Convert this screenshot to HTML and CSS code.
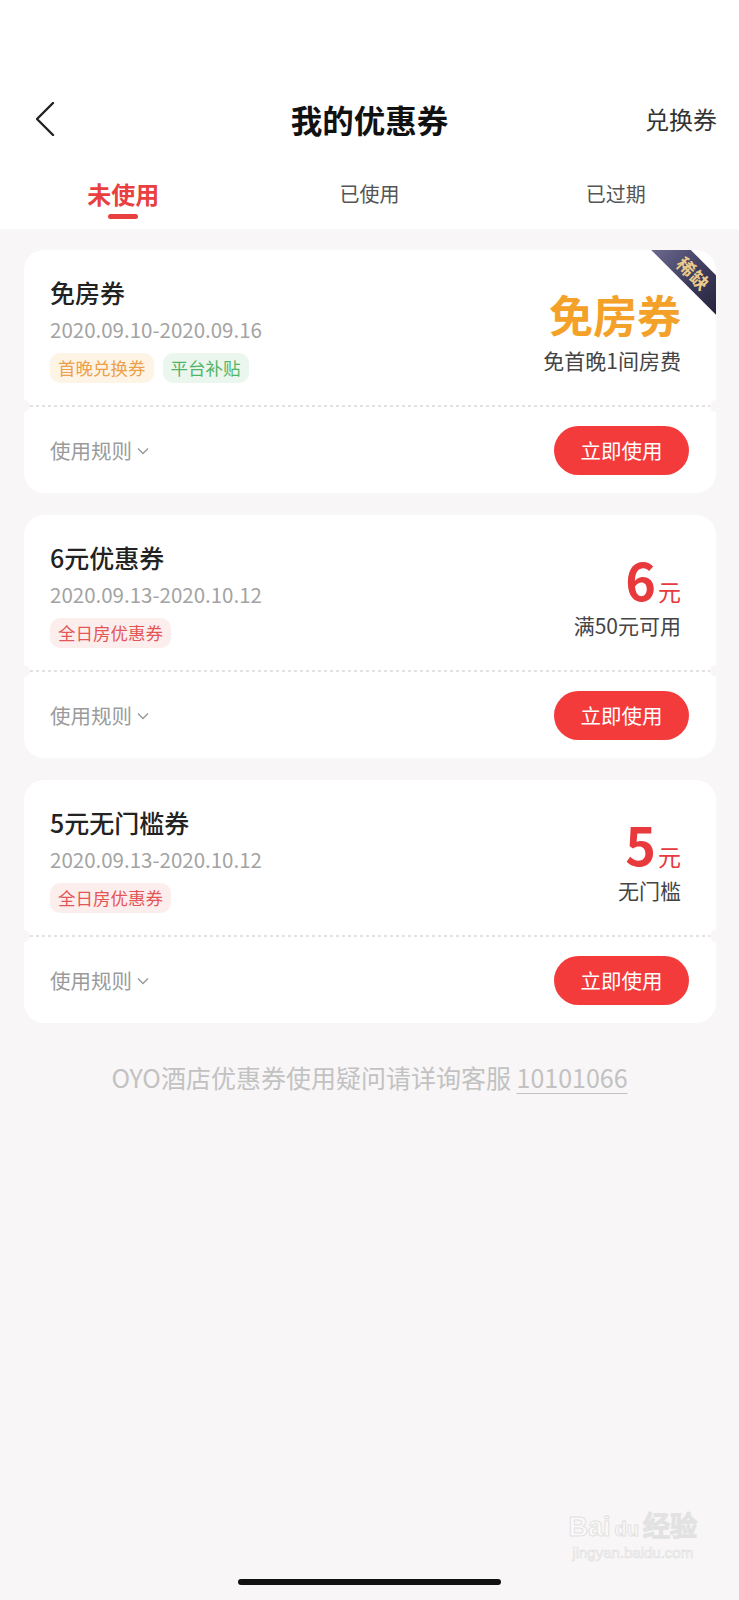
FILE: index.html
```html
<!DOCTYPE html>
<html lang="zh-CN">
<head>
<meta charset="utf-8">
<title>我的优惠券</title>
<link rel="stylesheet" href="styles.css">
</head>
<body>
<div class="screen">
  <header class="top">
    <div class="statusbar"></div>
    <div class="navbar">
      <svg class="back" width="20" height="34" viewBox="0 0 20 34" aria-hidden="true">
        <polyline points="17,1 1,17 17,33" fill="none" stroke="#222" stroke-width="2.4" stroke-linecap="round" stroke-linejoin="round"/>
      </svg>
      <h1 class="title">我的优惠券</h1>
      <span class="nav-action">兑换券</span>
    </div>
    <nav class="tabs">
      <div class="tab active"><span class="tab-text">未使用</span><i class="tab-line"></i></div>
      <div class="tab"><span class="tab-text">已使用</span></div>
      <div class="tab"><span class="tab-text">已过期</span></div>
    </nav>
  </header>

  <main class="list">
    <section class="coupon">
      <div class="coupon-main">
        <div class="info">
          <h2 class="c-title">免房券</h2>
          <p class="c-date">2020.09.10-2020.09.16</p>
          <div class="tags">
            <span class="tag tag-orange">首晚兑换券</span>
            <span class="tag tag-green">平台补贴</span>
          </div>
        </div>
        <div class="value">
          <div class="amount amount-orange">免房券</div>
          <div class="cond">免首晚1间房费</div>
        </div>
        <div class="ribbon">稀缺</div>
      </div>
      <div class="perf"></div>
      <div class="coupon-foot">
        <span class="rules">使用规则<svg class="chev" width="12" height="8" viewBox="0 0 12 8"><polyline points="1,1.5 6,6.5 11,1.5" fill="none" stroke="#999" stroke-width="1.4"/></svg></span>
        <button class="use-btn">立即使用</button>
      </div>
    </section>

    <section class="coupon">
      <div class="coupon-main">
        <div class="info">
          <h2 class="c-title">6元优惠券</h2>
          <p class="c-date">2020.09.13-2020.10.12</p>
          <div class="tags">
            <span class="tag tag-red">全日房优惠券</span>
          </div>
        </div>
        <div class="value">
          <div class="amount amount-red"><span class="num">6</span><span class="unit">元</span></div>
          <div class="cond">满50元可用</div>
        </div>
      </div>
      <div class="perf"></div>
      <div class="coupon-foot">
        <span class="rules">使用规则<svg class="chev" width="12" height="8" viewBox="0 0 12 8"><polyline points="1,1.5 6,6.5 11,1.5" fill="none" stroke="#999" stroke-width="1.4"/></svg></span>
        <button class="use-btn">立即使用</button>
      </div>
    </section>

    <section class="coupon">
      <div class="coupon-main">
        <div class="info">
          <h2 class="c-title">5元无门槛券</h2>
          <p class="c-date">2020.09.13-2020.10.12</p>
          <div class="tags">
            <span class="tag tag-red">全日房优惠券</span>
          </div>
        </div>
        <div class="value">
          <div class="amount amount-red"><span class="num">5</span><span class="unit">元</span></div>
          <div class="cond">无门槛</div>
        </div>
      </div>
      <div class="perf"></div>
      <div class="coupon-foot">
        <span class="rules">使用规则<svg class="chev" width="12" height="8" viewBox="0 0 12 8"><polyline points="1,1.5 6,6.5 11,1.5" fill="none" stroke="#999" stroke-width="1.4"/></svg></span>
        <button class="use-btn">立即使用</button>
      </div>
    </section>
  </main>

  <p class="footnote">OYO酒店优惠券使用疑问请详询客服 <span class="phone">10101066</span></p>

  <div class="watermark">
    <div class="wm-logo">Bai<span class="wm-du">du</span>经验</div>
    <div class="wm-url">jingyan.baidu.com</div>
  </div>

  <div class="home-bar"></div>
</div>
</body>
</html>
```

FILE: styles.css
```css
* { box-sizing: border-box; }

html, body {
  margin: 0;
  padding: 0;
}

body {
  background: #f8f6f7;
  font-family: "Noto Sans CJK SC", "Noto Sans", sans-serif;
  color: #222;
}

.screen {
  position: relative;
  width: 739px;
  min-height: 1600px;
  display: flex;
  flex-direction: column;
}

/* ---------- header ---------- */
.top {
  background: #fff;
}

.statusbar {
  height: 80px;
}

.navbar {
  height: 78px;
  display: grid;
  grid-template-columns: 1fr auto 1fr;
  align-items: center;
}

.back {
  margin-left: 36px;
  display: block;
}

.title {
  margin: 0;
  font-size: 31.5px;
  font-weight: 700;
  line-height: 40px;
  color: #111;
}

.nav-action {
  justify-self: end;
  margin-right: 22px;
  font-size: 24px;
  line-height: 32px;
  color: #333;
}

.tabs {
  height: 71px;
  display: grid;
  grid-template-columns: repeat(3, 1fr);
}

.tab {
  display: flex;
  flex-direction: column;
  align-items: center;
  padding-top: 21px;
}

.tab-text {
  font-size: 20px;
  line-height: 30px;
  color: #555;
}

.tab.active .tab-text {
  font-size: 24px;
  font-weight: 700;
  color: #e8403f;
}

.tab-line {
  display: block;
  width: 30px;
  height: 5px;
  margin-top: 5px;
  border-radius: 3px;
  background: #e8403f;
}

/* ---------- coupon list ---------- */
.list {
  padding: 21px 23px 0 24px;
  display: flex;
  flex-direction: column;
  gap: 22px;
}

.coupon {
  position: relative;
  background: #fff;
  border-radius: 20px;
  overflow: hidden;
}

.coupon-main {
  position: relative;
  height: 155px;
  padding: 26px 35px 0 26px;
  display: flex;
  justify-content: space-between;
}

.c-title {
  margin: 0;
  font-size: 25px;
  font-weight: 500;
  line-height: 32px;
  color: #222;
}

.c-date {
  margin: 8px 0 0;
  font-size: 20.5px;
  line-height: 26px;
  color: #a3a3a3;
}

.tags {
  margin-top: 11px;
  display: flex;
  gap: 9px;
}

.tag {
  height: 30px;
  padding: 0 8px;
  border-radius: 10px;
  font-size: 17.5px;
  line-height: 30px;
}

.tag-orange { background: #fdf4e6; color: #eda04a; }
.tag-green  { background: #ebf6ee; color: #4fb566; }
.tag-red    { background: #fdeeee; color: #e45656; }

.value {
  padding-top: 12px;
  display: flex;
  flex-direction: column;
  align-items: flex-end;
}

.amount {
  height: 52px;
  line-height: 52px;
  white-space: nowrap;
}

.amount-orange {
  font-size: 44px;
  font-weight: 700;
  color: #f4a12a;
}

.amount-red {
  color: #e8393c;
}

.amount-red .num {
  font-size: 52px;
  font-weight: 700;
}

.amount-red .unit {
  font-size: 23px;
  margin-left: 2px;
}

.cond {
  margin-top: 6px;
  font-size: 21px;
  line-height: 28px;
  color: #444;
}

.ribbon {
  position: absolute;
  top: 9px;
  right: -35px;
  width: 114px;
  height: 28px;
  transform: rotate(45deg);
  background: linear-gradient(to right, #74729a, #3c3a5a 55%, #1f1d33);
  color: #ebcb8c;
  font-size: 18px;
  font-weight: 700;
  line-height: 28px;
  text-align: center;
  letter-spacing: 1px;
}

.perf {
  position: relative;
  height: 2px;
  margin: 0 6px;
  background-image: linear-gradient(to right, #e3e1e2 50%, transparent 50%);
  background-size: 6px 2px;
  background-repeat: repeat-x;
}

.perf::before,
.perf::after {
  content: "";
  position: absolute;
  top: -5px;
  width: 12px;
  height: 12px;
  border-radius: 50%;
  background: #f8f6f7;
}

.perf::before { left: -12px; }
.perf::after  { right: -12px; }

.coupon-foot {
  height: 86px;
  padding: 0 27px 0 26px;
  display: flex;
  align-items: center;
  justify-content: space-between;
}

.rules {
  display: flex;
  align-items: center;
  font-size: 20.5px;
  line-height: 28px;
  color: #9b9b9b;
}

.chev {
  margin-left: 5px;
  margin-top: 2px;
}

.use-btn {
  width: 135px;
  height: 49px;
  border: none;
  border-radius: 25px;
  background: #f43b3c;
  color: #fff;
  font-family: inherit;
  font-size: 20.5px;
  line-height: 49px;
  padding: 0;
}

/* ---------- footer ---------- */
.footnote {
  margin: 37px 0 0;
  text-align: center;
  font-size: 25px;
  line-height: 34px;
  color: #c2c2c2;
}

.phone {
  text-decoration: underline;
  text-underline-offset: 5px;
  text-decoration-thickness: 1px;
}

.watermark {
  position: absolute;
  right: 42px;
  bottom: 38px;
  text-align: center;
  color: #fbfafa;
  -webkit-text-stroke: 1px #e2e2e2;
}

.wm-logo {
  font-family: "Liberation Sans", sans-serif;
  font-size: 27px;
  font-weight: 700;
  line-height: 30px;
}

.wm-du {
  font-size: 20px;
  margin: 0 4px;
}

.wm-url {
  font-family: "Liberation Sans", sans-serif;
  font-size: 15px;
  line-height: 18px;
  -webkit-text-stroke: 0.6px #dedede;
}

.home-bar {
  width: 263px;
  height: 6px;
  margin: auto auto 15px;
  border-radius: 3px;
  background: #111;
}
```
